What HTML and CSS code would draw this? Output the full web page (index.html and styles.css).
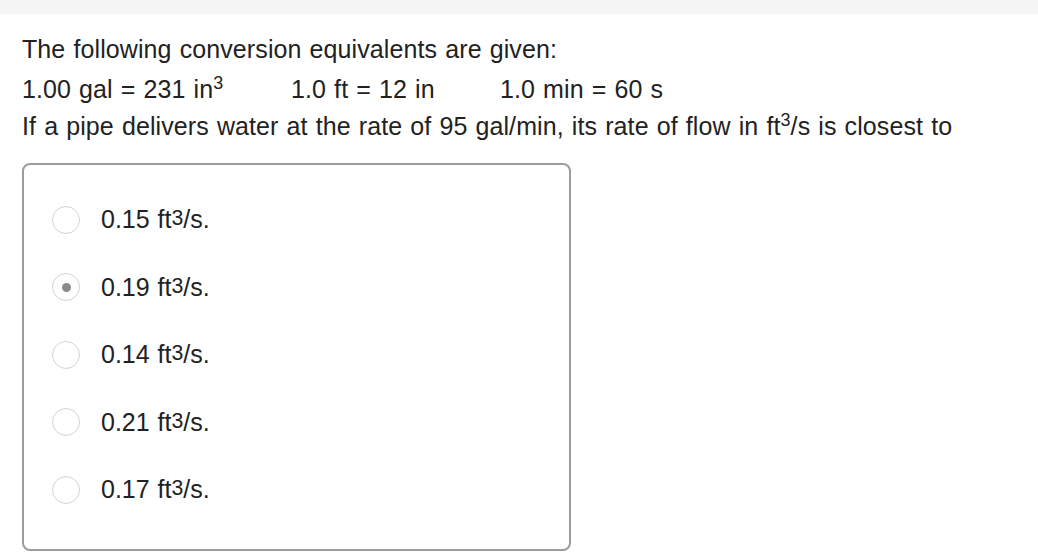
FILE: index.html
```html
<!DOCTYPE html>
<html>
<head>
<meta charset="utf-8">
<link rel="stylesheet" href="styles.css">
</head>
<body>
<div class="topbar"></div>
<div class="content">
  <div class="question">
    <div class="line first">The following conversion equivalents are given:</div>
    <div class="line equivs">
      <span class="eq eq1">1.00 gal = 231 in<sup>3</sup></span>
      <span class="eq eq2">1.0 ft = 12 in</span>
      <span class="eq">1.0 min = 60 s</span>
    </div>
    <div class="line">If a pipe delivers water at the rate of 95 gal/min, its rate of flow in ft<sup>3</sup>/s is closest to</div>
  </div>
  <div class="options">
    <div class="option"><span class="radio"></span><span class="label">0.15 ft<span class="small3">3</span>/s.</span></div>
    <div class="option"><span class="radio checked"></span><span class="label">0.19 ft<span class="small3">3</span>/s.</span></div>
    <div class="option"><span class="radio"></span><span class="label">0.14 ft<span class="small3">3</span>/s.</span></div>
    <div class="option"><span class="radio"></span><span class="label">0.21 ft<span class="small3">3</span>/s.</span></div>
    <div class="option"><span class="radio"></span><span class="label">0.17 ft<span class="small3">3</span>/s.</span></div>
  </div>
</div>
</body>
</html>
```
FILE: styles.css
```css
html, body {
  margin: 0;
  padding: 0;
  background: #ffffff;
}
body {
  font-family: "Liberation Sans", Arial, sans-serif;
  color: #222222;
  width: 1038px;
  height: 556px;
  overflow: hidden;
}
.topbar {
  height: 14px;
  background: #f5f5f5;
}
.content {
  padding: 17px 22px 0 22px;
}
.question {
  font-size: 25px;
  line-height: 37px;
  word-spacing: 1px;
  letter-spacing: 0.1px;
}
.line {
  white-space: nowrap;
}
.line.first {
  margin-bottom: 3px;
}
.equivs {
  display: flex;
}
.eq1 { width: 269px; }
.eq2 { width: 209px; }
sup {
  font-size: 0.72em;
  line-height: 0;
  vertical-align: 0.5em;
}
.options {
  margin-top: 18px;
  width: 549px;
  height: 388px;
  border: 2px solid #9c9c9c;
  border-radius: 8px;
  box-sizing: border-box;
  padding-top: 21px;
}
.option {
  display: flex;
  align-items: center;
  height: 67.5px;
  padding-left: 28px;
}
.radio {
  width: 26px;
  height: 26px;
  border: 1px solid #d4d4d4;
  border-radius: 50%;
  display: flex;
  align-items: center;
  justify-content: center;
  margin-right: 21px;
  flex: none;
}
.radio.checked::after {
  content: "";
  width: 9px;
  height: 9px;
  border-radius: 50%;
  background: #8a8a8a;
}
.label {
  font-size: 25px;
  word-spacing: 1px;
}
.small3 {
  font-size: 0.85em;
  vertical-align: 0.12em;
}
```
